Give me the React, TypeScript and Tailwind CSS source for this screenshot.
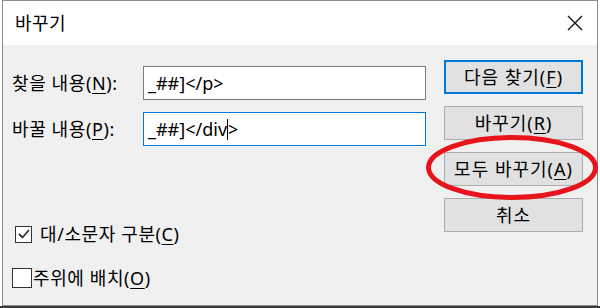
import React from "react";

const F = { fontFamily: '"Noto Sans", "Noto Sans CJK KR", sans-serif' };

function Btn({ children, focused }: { children: React.ReactNode; focused?: boolean }) {
  return (
    <div
      className={
        "h-[34px] w-[139px] flex items-center justify-center bg-[#e1e1e1] text-[18px] leading-none tracking-[1px] text-black " +
        (focused ? "border-2 border-[#0078d7]" : "border border-[#adadad]")
      }
    >
      {children}
    </div>
  );
}

export default function App() {
  return (
    <div className="relative w-[600px] h-[308px] bg-white overflow-hidden" style={F}>
      <div className="ml-[2px] w-[596px] h-[306px] border border-[#8c8c8c] flex flex-col">
        {/* title bar */}
        <div className="h-[44px] bg-white flex items-center justify-between pl-[12px] pr-[12px]">
          <span className="text-[18px] text-black leading-none tracking-[0.5px]">바꾸기</span>
          <svg width="18" height="18" viewBox="0 0 18 18" className="mr-[1px]">
            <path d="M2 2 L16 16 M16 2 L2 16" stroke="#111" strokeWidth="1.4" />
          </svg>
        </div>
        {/* body */}
        <div className="flex-1 bg-[#f0f0f0] flex">
          <div className="pl-[9px] pt-[21px] flex flex-col w-[423px]">
            <div className="flex items-center h-[34px]">
              <div className="w-[131px] text-[18px] text-black leading-none tracking-[0.6px]">
                찾을 내용(<span className="underline underline-offset-[3px]">N</span>):
              </div>
              <div className="w-[283px] h-[34px] bg-white border border-[#7a7a7a] flex items-center pl-[4px] text-[18px] text-black leading-none">
                _##]&lt;/p&gt;
              </div>
            </div>
            <div className="flex items-center h-[34px] mt-[12px]">
              <div className="w-[131px] text-[18px] text-black leading-none tracking-[0.6px]">
                바꿀 내용(<span className="underline underline-offset-[3px]">P</span>):
              </div>
              <div className="w-[283px] h-[34px] bg-white border border-[#0078d7] flex items-center pl-[4px] text-[18px] text-black leading-none">
                _##]&lt;/div
                <span className="inline-block w-[1px] h-[21px] bg-black" />
                &gt;
              </div>
            </div>
            <div className="flex items-center h-[20px] mt-[78px]">
              <div className="ml-[3px] w-[17px] h-[17px] border-[1.5px] border-[#333] bg-white flex items-center justify-center">
                <svg width="14" height="14" viewBox="0 0 14 14">
                  <polyline points="2,7 5.5,10.5 12,3" fill="none" stroke="#333" strokeWidth="1.8" />
                </svg>
              </div>
              <span className="ml-[8px] text-[18px] text-black leading-none tracking-[0.6px]">
                대/소문자 구분(<span className="underline underline-offset-[3px]">C</span>)
              </span>
            </div>
            <div className="flex items-center h-[20px] mt-[24px]">
              <div className="w-[20px] h-[20px] border-[1.5px] border-[#333] bg-white" />
              <span className="ml-[1px] text-[18px] text-black leading-none tracking-[0.6px]">
                주위에 배치(<span className="underline underline-offset-[3px]">O</span>)
              </span>
            </div>
          </div>
          <div className="ml-[18px] pt-[15px] flex flex-col gap-[12px]">
            <Btn focused>
              다음 찾기(<span className="underline underline-offset-[3px]">F</span>)
            </Btn>
            <Btn>
              바꾸기(<span className="underline underline-offset-[3px]">R</span>)
            </Btn>
            <Btn>
              모두 바꾸기(<span className="underline underline-offset-[3px]">A</span>)
            </Btn>
            <Btn>취소</Btn>
          </div>
        </div>
      </div>
      <div className="h-[2px] bg-[#3a3a3a]" />
      <svg className="absolute left-0 top-0 pointer-events-none" width="600" height="308">
        <ellipse cx="512" cy="167.5" rx="83.5" ry="30" fill="none" stroke="#e8141b" strokeWidth="5" />
      </svg>
    </div>
  );
}
